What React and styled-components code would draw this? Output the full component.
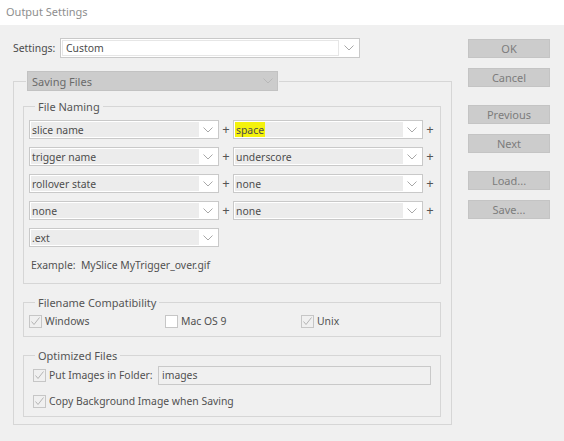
import React from "react";
import styled, { createGlobalStyle } from "styled-components";

const GlobalStyle = createGlobalStyle`
  html, body {
    margin: 0;
    padding: 0;
    background: #f0f0f0;
  }
  body {
    font-family: "Noto Sans", "Open Sans", sans-serif;
    font-size: 10.4px;
    color: #4a4a4a;
  }
`;

const Window = styled.div`
  width: 564px;
  height: 441px;
  background: #f0f0f0;
  overflow: hidden;
`;

const TitleBar = styled.div`
  height: 25px;
  background: #ffffff;
  color: #8e8e8e;
  font-size: 11px;
  line-height: 24px;
  padding-left: 6px;
`;

const Body = styled.div`
  display: flex;
  padding: 13px 0 0 13px;
`;

const Main = styled.div`
  width: 439px;
  display: flex;
  flex-direction: column;
`;

const SettingsRow = styled.div`
  display: flex;
  align-items: center;
`;

const Label = styled.span`
  width: 47px;
  color: #4a4a4a;
  white-space: nowrap;
`;

const DropBox = styled.div`
  box-sizing: border-box;
  width: ${(p) => p.$width}px;
  height: ${(p) => p.$height || 19}px;
  display: flex;
  align-items: stretch;
  border: 1px solid ${(p) => (p.$dark ? "#c2c2c2" : "#c9c9c9")};
  background: ${(p) => (p.$dark ? "#cccccc" : "#ffffff")};
  padding: 1px;
`;

const DropValue = styled.div`
  flex: 1;
  display: flex;
  align-items: center;
  padding-left: ${(p) => p.$pad ?? 1}px;
  background: ${(p) => (p.$dark ? "#cccccc" : p.$plain ? "#ffffff" : "#ececec")};
  border: ${(p) => (p.$framed ? "1px solid #e6e6e6" : "none")};
  color: ${(p) => (p.$dark ? "#6a6a6a" : "#4c4c4c")};
  white-space: nowrap;
  overflow: hidden;
`;

const Highlight = styled.span`
  background: #f4f20c;
  padding: 1px 1px;
  margin-left: -1px;
`;

const ChevronCell = styled.div`
  width: ${(p) => p.$w || 18}px;
  display: flex;
  align-items: center;
  justify-content: center;
`;

const Chevron = ({ color = "#a8a8a8" }) => (
  <svg width="10" height="6" viewBox="0 0 10 6">
    <polyline points="0.5,0.5 5,5 9.5,0.5" fill="none" stroke={color} strokeWidth="1" />
  </svg>
);

const Dropdown = ({ width, height, value, dark, plain, framed, pad, chevronWidth, highlight }) => (
  <DropBox $width={width} $height={height} $dark={dark}>
    <DropValue $dark={dark} $plain={plain} $framed={framed} $pad={pad}>
      {highlight ? <Highlight>{value}</Highlight> : value}
    </DropValue>
    <ChevronCell $w={chevronWidth}>
      <Chevron color={dark ? "#b8b8b8" : "#a8a8a8"} />
    </ChevronCell>
  </DropBox>
);

const Group = styled.fieldset`
  margin: ${(p) => p.$mt || 0}px 0 0 0;
  border: 1px solid #d6d6d6;
  padding: ${(p) => p.$pad};
  min-inline-size: 0;
`;

const Caption = styled.legend`
  padding: 0 3px;
  margin-left: ${(p) => p.$ml ?? 6}px;
  color: #555555;
  font-size: 11px;
  line-height: 15px;
`;

const SelectLegend = styled.legend`
  padding: 0 1px;
  margin-left: 3px;
  font-size: 11px;
`;

const NamingGrid = styled.div`
  display: grid;
  grid-template-columns: 190px 14px 190px 14px;
  row-gap: 8px;
  align-items: center;
`;

const Plus = styled.span`
  text-align: center;
  color: #555555;
  font-size: 13px;
  line-height: 19px;
`;

const Example = styled.div`
  margin-top: 11px;
  padding-left: 2px;
  line-height: 15px;
  color: #505050;
`;

const CheckGrid = styled.div`
  display: grid;
  grid-template-columns: 136px 136px 1fr;
  align-items: center;
`;

const CheckItem = styled.label`
  display: flex;
  align-items: center;
  gap: 3px;
  line-height: 15px;
  color: #505050;
  white-space: nowrap;
`;

const Box = styled.span`
  box-sizing: border-box;
  width: 13px;
  height: 13px;
  border: 1px solid #c6c6c6;
  background: ${(p) => (p.$checked ? "#f0f0f0" : "#ffffff")};
  display: flex;
  align-items: center;
  justify-content: center;
`;

const Checkbox = ({ checked, children }) => (
  <CheckItem>
    <Box $checked={checked}>
      {checked && (
        <svg width="11" height="11" viewBox="0 0 11 11">
          <polyline points="1.5,5.5 4,8.5 9.5,1.5" fill="none" stroke="#b4b4b4" strokeWidth="1" />
        </svg>
      )}
    </Box>
    {children}
  </CheckItem>
);

const OptimizedBody = styled.div`
  padding-left: 4px;
  display: flex;
  flex-direction: column;
  gap: 9px;
`;

const FolderRow = styled.div`
  display: grid;
  grid-template-columns: 125px 273px;
  align-items: center;
`;

const TextInput = styled.div`
  box-sizing: border-box;
  height: 19px;
  border: 1px solid #c9c9c9;
  background: #f0f0f0;
  padding-left: 3px;
  line-height: 17px;
  color: #505050;
`;

const ButtonColumn = styled.div`
  margin-left: 16px;
  padding-top: 1px;
  display: flex;
  flex-direction: column;
`;

const Button = styled.div`
  box-sizing: border-box;
  width: 82px;
  height: 19px;
  margin-top: ${(p) => p.$gap || 0}px;
  background: #cccccc;
  border: 1px solid #c4c4c4;
  color: #7c7c7c;
  font-size: 11px;
  text-align: center;
  line-height: 17px;
`;

const namingRows = [
  { left: "slice name", right: "space", highlight: true },
  { left: "trigger name", right: "underscore" },
  { left: "rollover state", right: "none" },
  { left: "none", right: "none" },
];

export default function App() {
  return (
    <Window>
      <GlobalStyle />
      <TitleBar>Output Settings</TitleBar>
      <Body>
        <Main>
          <SettingsRow>
            <Label>Settings:</Label>
            <Dropdown width={300} height={20} value="Custom" plain framed pad={3} chevronWidth={19} />
          </SettingsRow>

          <Group $mt={13} $pad="8px 10px 7px 9px">
            <SelectLegend>
              <Dropdown width={251} height={20} value="Saving Files" dark pad={3} chevronWidth={16} />
            </SelectLegend>

            <Group $pad="6px 3px 10px 5px">
              <Caption>File Naming</Caption>
              <NamingGrid>
                {namingRows.map((r) => (
                  <React.Fragment key={r.left + r.right}>
                    <Dropdown width={190} value={r.left} />
                    <Plus>+</Plus>
                    <Dropdown width={190} value={r.right} highlight={r.highlight} />
                    <Plus>+</Plus>
                  </React.Fragment>
                ))}
                <Dropdown width={190} value=".ext" />
              </NamingGrid>
              <Example>Example:&nbsp; MySlice MyTrigger_over.gif</Example>
            </Group>

            <Group $mt={11} $pad="4px 3px 7px 5px">
              <Caption>Filename Compatibility</Caption>
              <CheckGrid>
                <Checkbox checked>Windows</Checkbox>
                <Checkbox>Mac OS 9</Checkbox>
                <Checkbox checked>Unix</Checkbox>
              </CheckGrid>
            </Group>

            <Group $mt={11} $pad="3px 3px 7px 5px">
              <Caption>Optimized Files</Caption>
              <OptimizedBody>
                <FolderRow>
                  <Checkbox checked>Put Images in Folder:</Checkbox>
                  <TextInput>images</TextInput>
                </FolderRow>
                <Checkbox checked>Copy Background Image when Saving</Checkbox>
              </OptimizedBody>
            </Group>
          </Group>
        </Main>

        <ButtonColumn>
          <Button>OK</Button>
          <Button $gap={10}>Cancel</Button>
          <Button $gap={18}>Previous</Button>
          <Button $gap={10}>Next</Button>
          <Button $gap={18}>Load...</Button>
          <Button $gap={10}>Save...</Button>
        </ButtonColumn>
      </Body>
    </Window>
  );
}
